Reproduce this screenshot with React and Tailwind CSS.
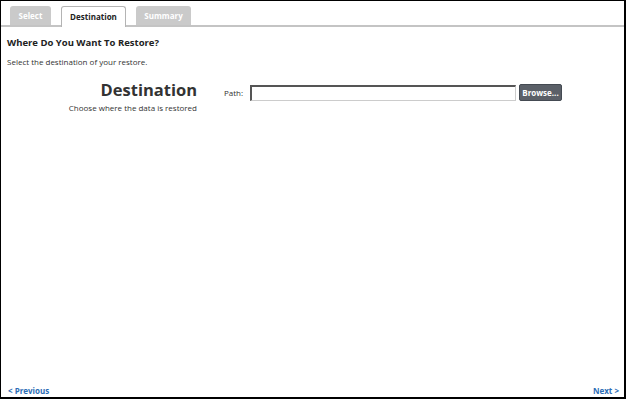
import React from "react";

const tabs = [
  { label: "Select", active: false, w: "w-[41px]" },
  { label: "Destination", active: true, w: "w-[65px]" },
  { label: "Summary", active: false, w: "w-[55px]" },
];

const App = () => {
  return (
    <div
      className="w-[626px] h-[399px] bg-white border-l border-t border-r-2 border-b-2 border-black flex flex-col text-[#222]"
      style={{ fontFamily: '"Open Sans", "Noto Sans", sans-serif' }}
    >
      {/* Tabs */}
      <div className="flex items-end gap-[10px] pl-[9px] pt-[4px] border-b-2 border-[#c4c4c4] h-[26px]">
        {tabs.map(tab => (
          <div
            key={tab.label}
            className={
              tab.active
                ? `${tab.w} h-[21px] -mb-[2px] bg-white border border-b-0 border-[#b4b4b4] rounded-t-[3px] flex items-center justify-center text-[8px] font-bold text-[#222]`
                : `${tab.w} h-[19px] bg-[#cacaca] rounded-t-[3px] flex items-center justify-center text-[8px] font-bold text-white`
            }
          >
            {tab.label}
          </div>
        ))}
      </div>

      {/* Body */}
      <div className="flex-1 flex flex-col pl-[6px] pr-[4px]">
        <h1 className="mt-[10px] text-[9.5px] font-bold text-[#222] leading-[12px]">
          Where Do You Want To Restore?
        </h1>
        <p className="mt-[8px] text-[8px] leading-[10px] text-[#333]">
          Select the destination of your restore.
        </p>

        <div className="mt-[12px] flex items-start">
          <div className="w-[190px] flex flex-col items-end">
            <span className="text-[16.5px] font-bold leading-[22px] text-[#333]">Destination</span>
            <span className="text-[8px] leading-[10px] text-[#333] mt-[2px]">
              Choose where the data is restored
            </span>
          </div>
          <div className="ml-[27px] mt-[5px] flex items-center">
            <span className="text-[8px] text-[#333] w-[26px]">Path:</span>
            <div className="w-[266px] h-[16px] bg-white border border-[#ccc] border-t-[#555] border-l-[#555] border-t-2 border-l-2" />
            <button className="ml-[3px] w-[43px] h-[17px] rounded-[2px] bg-[#5b6068] border border-[#444a52] text-white text-[8px] font-bold flex items-center justify-center">
              Browse...
            </button>
          </div>
        </div>

        <div className="flex-1" />

        {/* Footer */}
        <div className="flex justify-between items-center h-[14px] mb-[-1px] px-[1px] text-[8px] font-bold text-[#2d6db5]">
          <span>&lt; Previous</span>
          <span>Next &gt;</span>
        </div>
      </div>
    </div>
  );
};

export default App;
